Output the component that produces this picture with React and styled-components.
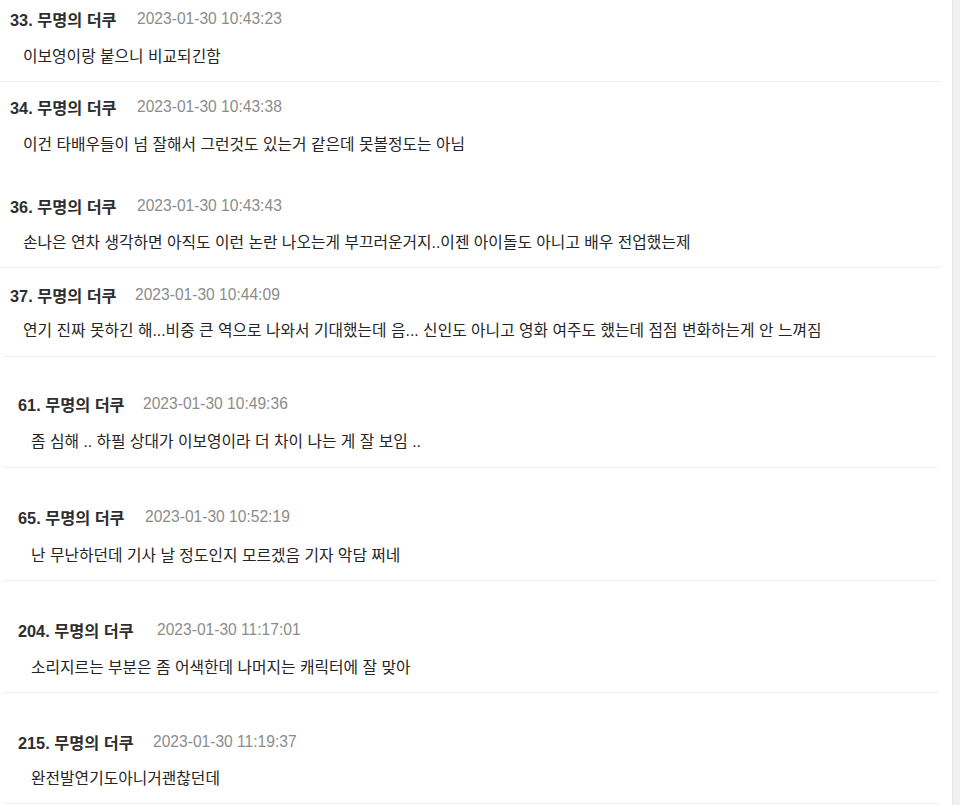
import React from "react";
import styled, { createGlobalStyle } from "styled-components";

const GlobalStyle = createGlobalStyle`
  html, body { margin: 0; padding: 0; background: #ffffff; }
  body {
    font-family: "Liberation Sans", "Noto Sans CJK KR", sans-serif;
    color: #222;
    -webkit-font-smoothing: antialiased;
  }
`;

const Page = styled.div`
  display: flex;
  width: 960px;
  height: 805px;
  overflow: hidden;
  background: #fff;
`;

const List = styled.div`
  width: 940px;
  display: flex;
  flex-direction: column;
`;

const Spacer = styled.div`
  flex: 1;
`;

const ScrollTrack = styled.div`
  width: 7px;
  background: #f0f0f0;
  border-left: 1px solid #e6e6e6;
`;

const Item = styled.div`
  display: flex;
  flex-direction: column;
  gap: ${(p) => p.$gap}px;
  padding: ${(p) => p.$top}px 0 ${(p) => p.$bottom}px ${(p) => p.$inset}px;
  margin-left: ${(p) => p.$lineStart}px;
  margin-right: ${(p) => p.$lineEnd}px;
  border-bottom: ${(p) => (p.$divider ? "1px solid #ededed" : "none")};
`;

const Header = styled.div`
  display: flex;
  align-items: center;
  height: 20px;
  white-space: nowrap;
`;

const Author = styled.span`
  font-size: 16.3px;
  font-weight: 700;
  color: #2e2e2e;
  width: ${(p) => p.$w}px;
  flex: none;
`;

const Time = styled.span`
  font-size: 15.6px;
  color: #8c8c8c;
`;

const Body = styled.div`
  height: 22px;
  line-height: 22px;
  font-size: 15.8px;
  color: #252525;
  padding-left: 13px;
  white-space: nowrap;
`;

const comments = [
  { n: 33, time: "2023-01-30 10:43:23", text: "이보영이랑 붙으니 비교되긴함", top: 9, bottom: 13, inset: 10, lineStart: 0, lineEnd: 0, divider: true, gap: 17, w: 127 },
  { n: 34, time: "2023-01-30 10:43:38", text: "이건 타배우들이 넘 잘해서 그런것도 있는거 같은데 못볼정도는 아님", top: 15, bottom: 18, inset: 10, lineStart: 0, lineEnd: 0, divider: false, gap: 17, w: 127 },
  { n: 36, time: "2023-01-30 10:43:43", text: "손나은 연차 생각하면 아직도 이런 논란 나오는게 부끄러운거지..이젠 아이돌도 아니고 배우 전업했는제", top: 22, bottom: 13, inset: 10, lineStart: 0, lineEnd: 0, divider: true, gap: 16, w: 127 },
  { n: 37, time: "2023-01-30 10:44:09", text: "연기 진짜 못하긴 해...비중 큰 역으로 나와서 기대했는데 음... 신인도 아니고 영화 여주도 했는데 점점 변화하는게 안 느껴짐", top: 17, bottom: 14, inset: 7, lineStart: 3, lineEnd: 5, divider: true, gap: 15, w: 125 },
  { n: 61, time: "2023-01-30 10:49:36", text: "좀 심해 .. 하필 상대가 이보영이라 더 차이 나는 게 잘 보임 ..", top: 37, bottom: 14, inset: 14, lineStart: 4, lineEnd: 3, divider: true, gap: 17, w: 125 },
  { n: 65, time: "2023-01-30 10:52:19", text: "난 무난하던데 기사 날 정도인지 모르겠음 기자 악담 쩌네", top: 39, bottom: 13, inset: 14, lineStart: 4, lineEnd: 3, divider: true, gap: 18, w: 127 },
  { n: 204, time: "2023-01-30 11:17:01", text: "소리지르는 부분은 좀 어색한데 나머지는 캐릭터에 잘 맞아", top: 39, bottom: 13, inset: 14, lineStart: 4, lineEnd: 2, divider: true, gap: 17, w: 139 },
  { n: 215, time: "2023-01-30 11:19:37", text: "완전발연기도아니거괜찮던데", top: 39, bottom: 13, inset: 14, lineStart: 4, lineEnd: 2, divider: true, gap: 16, w: 135 },
];

export default function App() {
  return (
    <>
      <GlobalStyle />
      <Page>
        <List>
          {comments.map((c) => (
            <Item
              key={c.n}
              $top={c.top}
              $bottom={c.bottom}
              $inset={c.inset}
              $lineStart={c.lineStart}
              $lineEnd={c.lineEnd}
              $divider={c.divider}
              $gap={c.gap}
            >
              <Header>
                <Author $w={c.w}>{c.n}. 무명의 더쿠</Author>
                <Time>{c.time}</Time>
              </Header>
              <Body>{c.text}</Body>
            </Item>
          ))}
        </List>
        <Spacer />
        <ScrollTrack />
      </Page>
    </>
  );
}
